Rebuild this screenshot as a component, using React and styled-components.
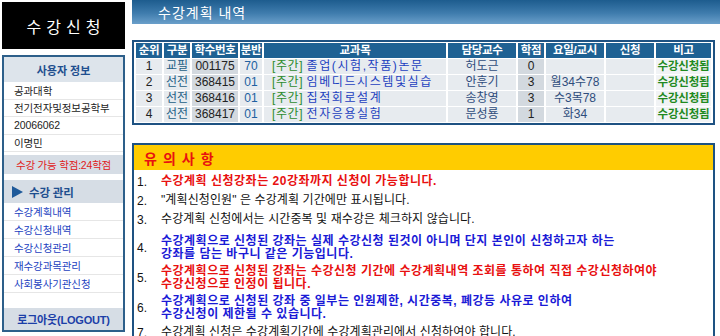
import React from 'react';
import styled, { createGlobalStyle } from 'styled-components';

const GlobalStyle = createGlobalStyle`
  html, body {
    margin: 0;
    padding: 0;
    background: #fff;
  }
  body {
    font-family: "Liberation Sans", "Noto Sans CJK KR", sans-serif;
    font-size: 12px;
    color: #222;
    overflow: hidden;
  }
`;

const Page = styled.div`
  display: flex;
  width: 720px;
  height: 336px;
  overflow: hidden;
`;

/* ---------- left menu ---------- */

const Sidebar = styled.div`
  width: 123px;
  flex-shrink: 0;
  padding: 2px 0 0 2px;
  display: flex;
  flex-direction: column;
  gap: 6px;
`;

const Brand = styled.div`
  height: 47px;
  background: #000;
  color: #fff;
  font-size: 16px;
  letter-spacing: 5px;
  padding-left: 5px;
  display: flex;
  align-items: center;
  justify-content: center;
`;

const MenuBox = styled.div`
  border: 2px solid #2d5f8a;
  display: flex;
  flex-direction: column;
  background: #fff;
`;

const MenuHead = styled.div`
  height: 25px;
  background: #dde4eb;
  color: #1f4f8f;
  font-weight: bold;
  font-size: 11px;
  display: flex;
  align-items: center;
  justify-content: center;
`;

const MenuRow = styled.div`
  height: ${p => p.h || 17.5}px;
  box-sizing: border-box;
  padding-left: 10px;
  display: flex;
  align-items: center;
  font-size: 10.5px;
  letter-spacing: -0.1px;
  color: ${p => p.color || '#222'};
  border-bottom: 1px solid #e6e6e6;
  white-space: nowrap;
`;

const MenuBand = styled.div`
  height: ${p => p.h}px;
  margin-top: ${p => p.mt || 0}px;
  background: #d6dde5;
  display: flex;
  align-items: center;
  justify-content: ${p => (p.center ? 'center' : 'flex-start')};
  padding-left: ${p => (p.center ? 0 : 8)}px;
  font-size: ${p => p.fs || 11}px;
  font-weight: ${p => (p.bold ? 'bold' : 'normal')};
  letter-spacing: -0.2px;
  color: ${p => p.color};
  gap: 6px;
  white-space: nowrap;
`;

const Arrow = styled.span`
  width: 0;
  height: 0;
  border-top: 6px solid transparent;
  border-bottom: 6px solid transparent;
  border-left: 11px solid #1f5a9a;
`;

const Spacer = styled.div`
  height: ${p => p.h}px;
`;

/* ---------- main ---------- */

const Main = styled.div`
  flex: 1;
  margin-left: 7px;
  display: flex;
  flex-direction: column;
`;

const TitleBar = styled.div`
  height: 24px;
  flex-shrink: 0;
  background: linear-gradient(to bottom, #1d5c8e 0%, #3f7cad 55%, #6a9fca 100%);
  color: #fff;
  font-size: 14px;
  letter-spacing: 1px;
  padding-left: 26px;
  display: flex;
  align-items: center;
`;

const Content = styled.div`
  margin-right: 5px;
  display: flex;
  flex-direction: column;
`;

const Table = styled.table`
  margin-top: 16px;
  border: 2px solid #1e5282;
  border-collapse: separate;
  border-spacing: 2px 1px;
  table-layout: fixed;
  width: 100%;
  font-size: 12px;
  line-height: 15px;
`;

const Th = styled.th`
  background: #1e6193;
  color: #fff;
  font-weight: bold;
  font-size: 11.5px;
  letter-spacing: -0.3px;
  height: 15px;
  padding: 0;
  white-space: nowrap;
  overflow: hidden;
  width: ${p => (p.w ? `${p.w}px` : 'auto')};
`;

const Td = styled.td`
  height: 15px;
  padding: ${p => (p.left ? '0 0 0 8px' : '0')};
  text-align: ${p => (p.left ? 'left' : 'center')};
  background: ${p => p.bg || '#e7ebef'};
  color: ${p => p.color || '#222'};
  font-weight: ${p => (p.bold ? 'bold' : 'normal')};
  font-size: ${p => (p.bold ? 11.5 : 12)}px;
  letter-spacing: ${p => (p.bold ? '-0.2px' : '0')};
  white-space: nowrap;
  overflow: hidden;
`;

const Tag = styled.span`
  color: #2e8b2e;
  letter-spacing: 0.6px;
`;

const Course = styled.span`
  color: #1c3fbf;
  letter-spacing: 1.6px;
`;

const Notice = styled.div`
  margin-top: 18px;
  border: 2px solid #1e5282;
  border-bottom: none;
`;

const NoticeHead = styled.div`
  height: 25px;
  background: #ffcc00;
  color: #e81010;
  font-weight: bold;
  font-size: 14px;
  letter-spacing: 6px;
  padding-left: 10px;
  display: flex;
  align-items: center;
`;

const NoteList = styled.div`
  padding-top: 2px;
  display: flex;
  flex-direction: column;
`;

const Note = styled.div`
  display: grid;
  grid-template-columns: 24px 1fr;
  align-items: center;
  padding-left: 3px;
  height: ${p => (p.two ? 30 : 19)}px;
  margin-top: ${p => p.mt || 0}px;
`;

const Num = styled.span`
  font-size: 12px;
  color: #111;
`;

const NoteText = styled.span`
  font-size: 12px;
  font-weight: ${p => (p.bold ? 'bold' : 'normal')};
  color: ${p => p.color || '#111'};
  line-height: 13px;
  letter-spacing: ${p => (p.bold ? '0.5px' : '0.1px')};
  white-space: nowrap;
`;

const rows = [
  { no: 1, kind: '교필', code: '001175', cls: '70', name: '졸업(시험,작품)논문', prof: '허도근', cr: '0', time: '' },
  { no: 2, kind: '선전', code: '368415', cls: '01', name: '임베디드시스템및실습', prof: '안훈기', cr: '3', time: '월34수78' },
  { no: 3, kind: '선전', code: '368416', cls: '01', name: '집적회로설계', prof: '송창영', cr: '3', time: '수3목78' },
  { no: 4, kind: '선전', code: '368417', cls: '01', name: '전자응용실험', prof: '문성룡', cr: '1', time: '화34' },
];

const RED = '#e81010';
const BLUE = '#1a1ad6';

const notes = [
  { n: '1.', color: RED, bold: true, lines: ['수강계획 신청강좌는 20강좌까지 신청이 가능합니다.'] },
  { n: '2.', lines: ['"계획신청인원" 은 수강계획 기간에만 표시됩니다.'] },
  { n: '3.', lines: ['수강계획 신청에서는 시간중복 및 재수강은 체크하지 않습니다.'] },
  {
    n: '4.', color: BLUE, bold: true, mt: 4,
    lines: ['수강계획으로 신청된 강좌는 실제 수강신청 된것이 아니며 단지 본인이 신청하고자 하는', '강좌를 담는 바구니 같은 기능입니다.'],
  },
  {
    n: '5.', color: RED, bold: true,
    lines: ['수강계획으로 신청된 강좌는 수강신청 기간에 수강계획내역 조회를 통하여 직접 수강신청하여야', '수강신청으로 인정이 됩니다.'],
  },
  {
    n: '6.', color: BLUE, bold: true,
    lines: ['수강계획으로 신청된 강좌 중 일부는 인원제한, 시간중복, 폐강등 사유로 인하여', '수강신청이 제한될 수 있습니다.'],
  },
  { n: '7.', lines: ['수강계획 신청은 수강계획기간에 수강계획관리에서 신청하여야 합니다.'] },
];

export default function App() {
  return (
    <Page>
      <GlobalStyle />
      <Sidebar>
        <Brand>수강신청</Brand>
        <MenuBox>
          <MenuHead>사용자 정보</MenuHead>
          <MenuRow>공과대학</MenuRow>
          <MenuRow>전기전자및정보공학부</MenuRow>
          <MenuRow>20066062</MenuRow>
          <MenuRow>이명민</MenuRow>
          <MenuBand h={19} mt={3} center color="#e02020" fs={10.5}>수강 가능 학점:24학점</MenuBand>
          <MenuBand h={23} mt={6} bold color="#1f4f8f" fs={11.5}>
            <Arrow />
            수강 관리
          </MenuBand>
          <MenuRow h={18} color="#1c3fbf">수강계획내역</MenuRow>
          <MenuRow h={18} color="#1c3fbf">수강신청내역</MenuRow>
          <MenuRow h={18} color="#1c3fbf">수강신청관리</MenuRow>
          <MenuRow h={18} color="#1c3fbf">재수강과목관리</MenuRow>
          <MenuRow h={18} color="#1c3fbf">사회봉사기관신청</MenuRow>
          <Spacer h={15} />
          <MenuBand h={22} center bold color="#1c3fa8" fs={11}>로그아웃(LOGOUT)</MenuBand>
        </MenuBox>
      </Sidebar>

      <Main>
        <TitleBar>수강계획 내역</TitleBar>
        <Content>
          <Table>
            <thead>
              <tr>
                <Th w={26}>순위</Th>
                <Th w={26}>구분</Th>
                <Th w={46}>학수번호</Th>
                <Th w={22}>분반</Th>
                <Th>교과목</Th>
                <Th w={68}>담당교수</Th>
                <Th w={26}>학점</Th>
                <Th w={58}>요일/교시</Th>
                <Th w={48}>신청</Th>
                <Th w={55}>비고</Th>
              </tr>
            </thead>
            <tbody>
              {rows.map(r => (
                <tr key={r.no}>
                  <Td>{r.no}</Td>
                  <Td color="#245f85">{r.kind}</Td>
                  <Td bg="#d3d9df">{r.code}</Td>
                  <Td color="#2060a0">{r.cls}</Td>
                  <Td left>
                    <Tag>[주간]</Tag> <Course>{r.name}</Course>
                  </Td>
                  <Td color="#2f4d7c">{r.prof}</Td>
                  <Td bg="#d3d9df">{r.cr}</Td>
                  <Td color="#2f4d7c">{r.time}</Td>
                  <Td />
                  <Td bg="#f1f3f5" color="#1f8a1f" bold>수강신청됨</Td>
                </tr>
              ))}
            </tbody>
          </Table>

          <Notice>
            <NoticeHead>유의사항</NoticeHead>
            <NoteList>
              {notes.map(note => (
                <Note key={note.n} two={note.lines.length > 1} mt={note.mt}>
                  <Num>{note.n}</Num>
                  <NoteText color={note.color} bold={note.bold}>
                    {note.lines.map((l, i) => (
                      <React.Fragment key={i}>
                        {i > 0 && <br />}
                        {l}
                      </React.Fragment>
                    ))}
                  </NoteText>
                </Note>
              ))}
            </NoteList>
          </Notice>
        </Content>
      </Main>
    </Page>
  );
}
